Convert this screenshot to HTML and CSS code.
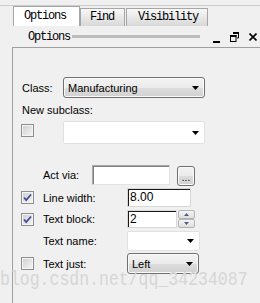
FILE: index.html
```html
<!DOCTYPE html>
<html lang="en">
<head>
    <meta charset="UTF-8">
    <title>Options</title>
    <link rel="stylesheet" href="styles.css">
</head>
<body>
<div class="window-top"></div>
<div class="tabs">
    <div class="tab active">Options</div>
    <div class="tab tab-find">Find</div>
    <div class="tab tab-vis">Visibility</div>
</div>
<div class="header">
    <span class="header-title">Options</span>
    <span class="header-grip"></span>
    <svg class="icon-min" width="7" height="10" viewBox="0 0 7 10"><rect x="0" y="8" width="7" height="2"/></svg>
    <svg class="icon-restore" width="9" height="10" viewBox="0 0 9 10">
        <path d="M3 0.5h5.5v5.5h-1.5" fill="none" stroke="#000" stroke-width="1"/>
        <rect x="3" y="0" width="6" height="2"/>
        <rect x="0.5" y="3.5" width="5.5" height="6" fill="none" stroke="#000" stroke-width="1"/>
        <rect x="0" y="3" width="6.5" height="2"/>
    </svg>
    <svg class="icon-close" width="8" height="8" viewBox="0 0 8 8"><path d="M0.5 0.5l7 7M7.5 0.5l-7 7" stroke="#000" stroke-width="1.6"/></svg>
</div>
<div class="panel">
    <div class="row row-class">
        <span class="lbl lbl-class">Class:</span>
        <div class="select sel-class">
            <span>Manufacturing</span>
            <svg class="arrow" width="7" height="4" viewBox="0 0 7 4"><path d="M0 0h7L3.5 4z"/></svg>
        </div>
    </div>
    <div class="lbl-line">New subclass:</div>
    <div class="row row-sub">
        <span class="check"></span>
        <div class="combo combo-sub">
            <svg class="arrow" width="7" height="4" viewBox="0 0 7 4"><path d="M0 0h7L3.5 4z"/></svg>
        </div>
    </div>
    <div class="row row-act">
        <span class="check-spacer"></span>
        <span class="lbl lbl-act">Act via:</span>
        <div class="textbox tb-act"></div>
        <div class="btn-more">...</div>
    </div>
    <div class="row row-line">
        <span class="check checked"><svg width="11" height="11" viewBox="0 0 11 11"><path d="M2 5.5l2.2 2.6L9 2.5" fill="none" stroke="#3d5193" stroke-width="1.8"/></svg></span>
        <span class="lbl lbl-field">Line width:</span>
        <div class="textbox tb-num tb-line">8.00</div>
    </div>
    <div class="row row-block">
        <span class="check checked"><svg width="11" height="11" viewBox="0 0 11 11"><path d="M2 5.5l2.2 2.6L9 2.5" fill="none" stroke="#3d5193" stroke-width="1.8"/></svg></span>
        <span class="lbl lbl-field">Text block:</span>
        <div class="textbox tb-num tb-block">2</div>
        <div class="spin">
            <div class="spin-btn"><svg width="5" height="3" viewBox="0 0 5 3"><path d="M0 3h5L2.5 0z"/></svg></div>
            <div class="spin-btn"><svg width="5" height="3" viewBox="0 0 5 3"><path d="M0 0h5L2.5 3z"/></svg></div>
        </div>
    </div>
    <div class="row row-name">
        <span class="check-spacer"></span>
        <span class="lbl lbl-field">Text name:</span>
        <div class="combo combo-name">
            <svg class="arrow" width="7" height="4" viewBox="0 0 7 4"><path d="M0 0h7L3.5 4z"/></svg>
        </div>
    </div>
    <div class="row row-just">
        <span class="check"></span>
        <span class="lbl lbl-field">Text just:</span>
        <div class="select sel-just">
            <span>Left</span>
            <svg class="arrow" width="7" height="4" viewBox="0 0 7 4"><path d="M0 0h7L3.5 4z"/></svg>
        </div>
    </div>
</div>
<div class="watermark">blog.csdn.net/qq_34234087</div>
</body>
</html>
```

FILE: styles.css
```css
body {
    margin: 0;
    height: 100vh;
    display: flex;
    flex-direction: column;
    overflow: hidden;
    position: relative;
    background-color: #f0f0f0;
    font-family: "Liberation Sans", Arial, sans-serif;
    font-size: 11px;
    color: #000;
}

.window-top {
    flex: none;
    height: 5px;
    border-bottom: 1px solid #cdcdcd;
}

/* tab strip */
.tabs {
    flex: none;
    display: flex;
    align-items: flex-end;
    height: 20px;
    padding-left: 13px;
    font-family: "Liberation Mono", monospace;
    font-size: 12px;
    letter-spacing: -1.2px;
}

.tab {
    box-sizing: border-box;
    height: 18px;
    padding-top: 1px;
    line-height: 14px;
    border: 1px solid #a5a5a5;
    border-bottom: none;
    background: linear-gradient(#f8f8f8, #e8e8e8 50%, #d8d8d8);
}

.tab.active {
    width: 67px;
    height: 20px;
    padding-top: 2px;
    padding-left: 10px;
    background: #fff;
}

.tab-find {
    width: 45px;
    padding-left: 9px;
}

.tab-vis {
    width: 82px;
    margin-left: 1px;
    padding-left: 11px;
}

/* docked panel header */
.header {
    flex: none;
    display: flex;
    align-items: center;
    height: 21px;
    padding-left: 28px;
    font-family: "Liberation Mono", monospace;
    font-size: 12px;
    letter-spacing: -1.2px;
    line-height: 14px;
}

.header-grip {
    width: 128px;
    height: 3px;
    margin-left: 2px;
    background-color: #bcbcbc;
}

.header svg {
    display: block;
}

.icon-min {
    margin-left: 13px;
    margin-top: 2px;
}

.icon-restore {
    margin-left: 10px;
}

.icon-close {
    margin-left: 10px;
}

/* panel body */
.panel {
    flex: 1;
    margin-left: 12px;
    padding: 29px 0 0 8px;
    border-left: 1px solid #a0a0a0;
    border-top: 1px solid #a0a0a0;
}

.row {
    display: flex;
    align-items: center;
}

.lbl {
    flex: none;
    padding-left: 1px;
    box-sizing: border-box;
}

.lbl-class {
    width: 42px;
}

.lbl-act {
    width: 50px;
}

.lbl-field {
    width: 85px;
}

.lbl-line {
    margin-top: 5px;
    height: 14px;
    line-height: 14px;
    padding-left: 1px;
}

.row-class {
    height: 21px;
}

.row-sub {
    margin-top: 4px;
    height: 23px;
    align-items: flex-start;
}

.row-sub .check {
    margin-top: 3px;
}

.row-act {
    margin-top: 21px;
    height: 20px;
}

.row-line {
    margin-top: 3px;
    height: 19px;
}

.row-block {
    margin-top: 3px;
    height: 18px;
}

.row-name {
    margin-top: 3px;
    height: 20px;
}

.row-just {
    margin-top: 2px;
    height: 21px;
}

/* checkboxes */
.check {
    flex: none;
    display: flex;
    align-items: center;
    justify-content: center;
    box-sizing: border-box;
    width: 13px;
    height: 13px;
    margin-right: 8px;
    border: 1px solid #8f8f8f;
    background: linear-gradient(135deg, #cdcdcd, #f7f7f7);
    box-shadow: inset 0 0 0 1px #f4f4f4;
}

.check-spacer {
    flex: none;
    width: 21px;
}

/* drop downs */
.select,
.combo {
    flex: none;
    display: flex;
    align-items: center;
    box-sizing: border-box;
    height: 100%;
    padding-left: 4px;
}

.select {
    border: 1px solid #707070;
    border-radius: 3px;
    background: linear-gradient(#f3f3f3, #ebebeb 50%, #dddddd 51%, #d1d1d1);
    box-shadow: inset 0 0 0 1px #fbfbfb;
}

.combo {
    border: 1px solid #e1e1e1;
    border-radius: 2px;
    background-color: #fff;
}

.arrow {
    margin-left: auto;
    margin-right: 5px;
}

.sel-class,
.combo-sub {
    width: 142px;
}

.combo-sub {
    margin-left: 21px;
}

.combo-name {
    width: 73px;
}

.sel-just {
    width: 72px;
}

/* text fields */
.textbox {
    flex: none;
    box-sizing: border-box;
    height: 100%;
    padding-left: 2px;
    background-color: #fff;
    border: 1px solid;
    border-color: #a8a8a8 #e3e3e3 #e3e3e3 #a8a8a8;
    box-shadow: inset 1px 1px 0 #808080;
    font-size: 12px;
    line-height: 17px;
}

.tb-act {
    width: 78px;
}

.tb-num {
    border-color: #d8d8d8;
    box-shadow: inset 1px 1px 0 #1a1a1a;
}

.tb-line {
    width: 64px;
}

.tb-block {
    width: 50px;
    line-height: 16px;
}

.btn-more {
    flex: none;
    align-self: flex-start;
    box-sizing: border-box;
    width: 18px;
    height: 20px;
    margin-left: 7px;
    margin-top: 1px;
    border: 1px solid #707070;
    border-radius: 3px;
    background: linear-gradient(#f3f3f3, #ebebeb 50%, #dddddd 51%, #d1d1d1);
    box-shadow: inset 0 0 0 1px #fbfbfb;
    text-align: center;
    line-height: 22px;
    font-size: 10px;
}

.spin {
    flex: none;
    display: flex;
    flex-direction: column;
    width: 17px;
    height: 18px;
    margin-left: 1px;
}

.spin-btn {
    display: flex;
    align-items: center;
    justify-content: center;
    box-sizing: border-box;
    height: 9px;
    border: 1px solid #b4b4b4;
    border-radius: 2px;
    background: linear-gradient(#f4f4f4, #dedede);
    fill: #4b5e8f;
}

.spin-btn svg {
    display: block;
}

/* blog watermark laid over the screenshot */
.watermark {
    position: absolute;
    left: 0;
    top: 271px;
    font-family: "Liberation Mono", monospace;
    font-size: 16.5px;
    line-height: 20px;
    color: #d6d6d6;
    white-space: nowrap;
    transform: scaleY(1.2);
    transform-origin: 0 14px;
}
```
